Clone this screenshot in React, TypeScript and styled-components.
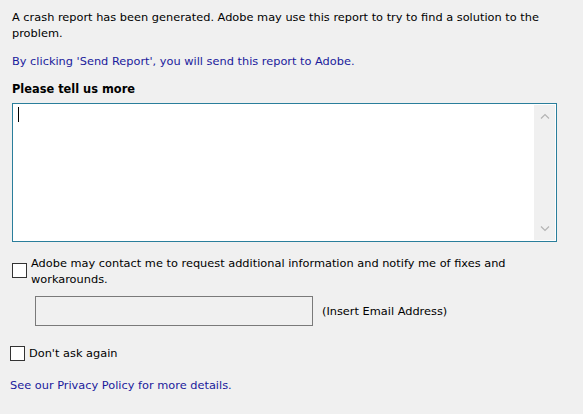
import styled, { createGlobalStyle } from "styled-components";

const GlobalStyle = createGlobalStyle`
  html, body {
    margin: 0;
    padding: 0;
    background: #f0f0f0;
  }
  body {
    font-family: "DejaVu Sans", "Liberation Sans", sans-serif;
    font-size: 11.35px;
    color: #000;
  }
`;

const Page = styled.div`
  width: 583px;
  height: 414px;
  box-sizing: border-box;
  padding: 9px 0 0 12px;
  background: #f0f0f0;
  overflow: hidden;
`;

const Paragraph = styled.p<{ link?: boolean }>`
  margin: 0;
  line-height: 16px;
  white-space: nowrap;
  color: ${props => (props.link ? "#1a1a9c" : "#000")};
`;

const Intro = styled(Paragraph)`
  margin-bottom: 12px;
`;

const Heading = styled.div`
  margin-top: 12px;
  font-weight: bold;
  font-size: 11.4px;
  line-height: 16px;
`;

const TextBox = styled.div`
  margin-top: 6px;
  width: 545px;
  height: 139px;
  box-sizing: border-box;
  border: 1px solid #2a7e9b;
  background: #fff;
  display: flex;
`;

const TextArea = styled.div`
  flex: 1;
  padding: 3px 5px;
`;

const Caret = styled.span`
  display: block;
  width: 1px;
  height: 15px;
  background: #000;
`;

const ScrollBar = styled.div`
  width: 21px;
  background: #f0f0f0;
  display: flex;
  flex-direction: column;
  justify-content: space-between;
  align-items: center;
  padding: 8px 0;
  margin: 1px 1px 1px 0;
`;

const Arrow = ({ up }: { up?: boolean }) => (
  <svg width="10" height="6" viewBox="0 0 10 6">
    <path
      d={up ? "M1 5.5 L5 1.5 L9 5.5" : "M1 0.5 L5 4.5 L9 0.5"}
      fill="none"
      stroke="#b4b4b4"
      strokeWidth="1.2"
    />
  </svg>
);

const CheckRow = styled.label<{ offset?: number }>`
  display: flex;
  align-items: flex-start;
  margin-left: ${props => props.offset ?? 0}px;
`;

const Box = styled.span<{ drop: number }>`
  flex: none;
  width: 13px;
  height: 13px;
  border: 1px solid #333;
  background: #fff;
  margin-top: ${props => props.drop}px;
  margin-right: 4px;
`;

const CheckText = styled.span`
  line-height: 16px;
  white-space: nowrap;
`;

const Contact = styled.div`
  margin-top: 13px;
`;

const EmailRow = styled.div`
  display: flex;
  align-items: center;
  margin: 9px 0 0 23px;
`;

const EmailInput = styled.div`
  width: 278px;
  height: 30px;
  box-sizing: border-box;
  border: 1px solid #7a7a7a;
  background: #f0f0f0;
  margin-right: 9px;
`;

const Hint = styled.span`
  line-height: 16px;
`;

const DontAsk = styled.div`
  margin-top: 19px;
`;

const Footer = styled(Paragraph)`
  margin: 16px 0 0 -2px;
`;

export default function App() {
  return (
    <Page>
      <GlobalStyle />
      <Intro>
        A crash report has been generated. Adobe may use this report to try to find a solution to the
        <br />
        problem.
      </Intro>
      <Paragraph link>By clicking 'Send Report', you will send this report to Adobe.</Paragraph>
      <Heading>Please tell us more</Heading>
      <TextBox>
        <TextArea>
          <Caret />
        </TextArea>
        <ScrollBar>
          <Arrow up />
          <Arrow />
        </ScrollBar>
      </TextBox>
      <Contact>
        <CheckRow>
          <Box drop={8} />
          <CheckText>
            Adobe may contact me to request additional information and notify me of fixes and
            <br />
            workarounds.
          </CheckText>
        </CheckRow>
      </Contact>
      <EmailRow>
        <EmailInput />
        <Hint>(Insert Email Address)</Hint>
      </EmailRow>
      <DontAsk>
        <CheckRow offset={-2}>
          <Box drop={1} />
          <CheckText>Don't ask again</CheckText>
        </CheckRow>
      </DontAsk>
      <Footer link>See our Privacy Policy for more details.</Footer>
    </Page>
  );
}
